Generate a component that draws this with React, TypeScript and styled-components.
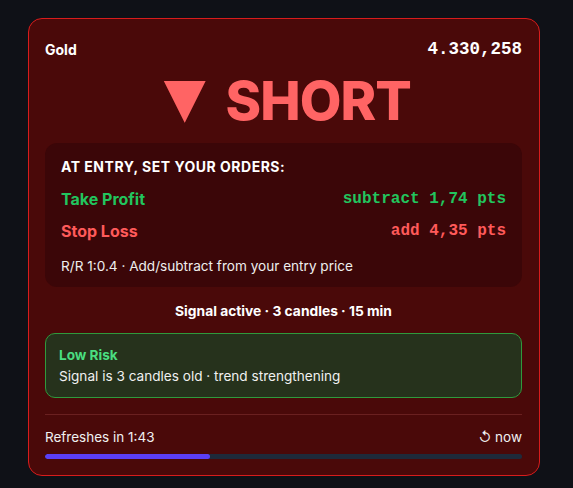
import React from "react";
import styled, { createGlobalStyle } from "styled-components";

const GlobalStyle = createGlobalStyle`
  html, body {
    margin: 0;
    padding: 0;
    background: #0f1117;
  }
  body {
    font-family: Inter, "Noto Sans", sans-serif;
    color: #f5f5f5;
  }
`;

const Page = styled.div`
  padding: 18px 0 0 28px;
  min-height: 100vh;
  box-sizing: border-box;
`;

const Card = styled.div`
  width: 512px;
  box-sizing: border-box;
  background: #4a0909;
  border: 1px solid #d81c1c;
  border-radius: 14px;
  padding: 19px 17px 16px 16px;
  display: flex;
  flex-direction: column;
`;

const Header = styled.div`
  display: flex;
  justify-content: space-between;
  align-items: center;
  height: 22px;
`;

const Asset = styled.div`
  font-size: 14px;
  font-weight: 700;
  color: #ffffff;
`;

const Price = styled.div`
  font-family: "Liberation Mono", "DejaVu Sans Mono", monospace;
  font-size: 17.5px;
  font-weight: 700;
  color: #ffffff;
`;

const Direction = styled.div`
  display: flex;
  justify-content: center;
  align-items: center;
  gap: 12px;
  font-size: 54px;
  font-weight: 800;
  color: #ff6464;
  line-height: 1;
  margin: 14px 0 15px;
  letter-spacing: -1px;
`;

const Arrow = styled.span`
  display: inline-block;
  transform: scaleX(0.82);
  letter-spacing: 0;
`;

const Orders = styled.div`
  background: #3b0608;
  border-radius: 12px;
  padding: 15px 16px 13px 16px;
  display: flex;
  flex-direction: column;
`;

const OrdersTitle = styled.div`
  font-size: 14px;
  font-weight: 700;
  color: #ffffff;
  letter-spacing: 0.5px;
  margin-bottom: 14px;
`;

const OrderRow = styled.div<{ $color: string }>`
  display: flex;
  justify-content: space-between;
  align-items: center;
  color: ${(p) => p.$color};
  height: 20px;
  margin-bottom: 12px;
`;

const OrderLabel = styled.span`
  font-size: 16px;
  font-weight: 700;
`;

const OrderValue = styled.span`
  font-family: "Liberation Mono", "DejaVu Sans Mono", monospace;
  font-size: 16px;
  font-weight: 700;
`;

const Note = styled.div`
  font-size: 13.6px;
  color: #eeeeee;
  margin-top: 5px;
`;

const Status = styled.div`
  text-align: center;
  font-size: 13.8px;
  font-weight: 700;
  color: #ffffff;
  margin: 16px 0 14px;
`;

const RiskBox = styled.div`
  background: #26321c;
  border: 1px solid #2f9a3c;
  border-radius: 10px;
  padding: 13px 13px 13px;
  display: flex;
  flex-direction: column;
  gap: 5px;
`;

const RiskTitle = styled.div`
  font-size: 13.6px;
  font-weight: 700;
  color: #4ade80;
`;

const RiskText = styled.div`
  font-size: 13.6px;
  color: #f0f0f0;
`;

const Divider = styled.div`
  height: 1px;
  background: #6a2020;
  margin: 16px 0 14px;
`;

const FooterRow = styled.div`
  display: flex;
  justify-content: space-between;
  align-items: center;
  font-size: 13.5px;
  color: #f0f0f0;
`;

const Track = styled.div`
  margin-top: 9px;
  height: 5px;
  border-radius: 3px;
  background: #1e2a3a;
  overflow: hidden;
`;

const Fill = styled.div`
  height: 100%;
  background: #5b3ff5;
  border-radius: 3px;
`;

const App: React.FC = () => {
  const progress = 34.6;
  return (
    <>
      <GlobalStyle />
      <Page>
        <Card>
          <Header>
            <Asset>Gold</Asset>
            <Price>4.330,258</Price>
          </Header>
          <Direction>
            <Arrow>▼</Arrow>
            <span>SHORT</span>
          </Direction>
          <Orders>
            <OrdersTitle>AT ENTRY, SET YOUR ORDERS:</OrdersTitle>
            <OrderRow $color="#22c55e">
              <OrderLabel>Take Profit</OrderLabel>
              <OrderValue>subtract 1,74 pts</OrderValue>
            </OrderRow>
            <OrderRow $color="#ff5a5a">
              <OrderLabel>Stop Loss</OrderLabel>
              <OrderValue>add 4,35 pts</OrderValue>
            </OrderRow>
            <Note>R/R 1:0.4 · Add/subtract from your entry price</Note>
          </Orders>
          <Status>Signal active · 3 candles · 15 min</Status>
          <RiskBox>
            <RiskTitle>Low Risk</RiskTitle>
            <RiskText>Signal is 3 candles old · trend strengthening</RiskText>
          </RiskBox>
          <Divider />
          <FooterRow>
            <span>Refreshes in 1:43</span>
            <span>↺ now</span>
          </FooterRow>
          <Track>
            <Fill style={{ width: `${progress}%` }} />
          </Track>
        </Card>
      </Page>
    </>
  );
};

export default App;
